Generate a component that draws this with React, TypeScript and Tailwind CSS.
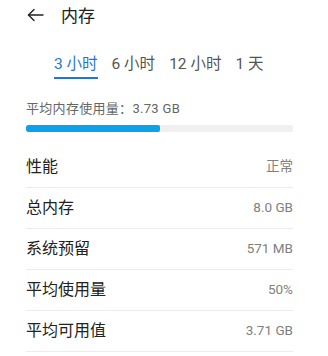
import React, { useState } from "react";

const tabs = ["3 小时", "6 小时", "12 小时", "1 天"];

const rows = [
  { label: "性能", value: "正常" },
  { label: "总内存", value: "8.0 GB" },
  { label: "系统预留", value: "571 MB" },
  { label: "平均使用量", value: "50%" },
  { label: "平均可用值", value: "3.71 GB" },
];

function BackArrow() {
  return (
    <svg width="17" height="16" viewBox="0 0 17 16" fill="none" stroke="#222" strokeWidth="1.4" strokeLinecap="round" strokeLinejoin="round">
      <path d="M1.5 8H16" />
      <path d="M7 2.5L1.5 8L7 13.5" />
    </svg>
  );
}

export default function App() {
  const [active, setActive] = useState(0);

  return (
    <div
      className="w-[328px] h-[356px] bg-white overflow-hidden"
      style={{ fontFamily: 'Roboto, "Noto Sans CJK SC", sans-serif' }}
    >
      {/* Header */}
      <div className="h-[30px] flex items-center pl-[27px]">
        <BackArrow />
        <span className="ml-[17px] text-[17px] leading-[20px] text-[#222] mt-[2px]">内存</span>
      </div>

      {/* Tabs */}
      <div className="mt-[24px] pl-[54px] flex gap-[14px]">
        {tabs.map((t, i) => (
          <button key={t} onClick={() => setActive(i)} className="flex flex-col items-stretch">
            <span
              className={`text-[15.5px] leading-[20px] whitespace-nowrap ${
                i === active ? "text-[#1f74e0]" : "text-[#555]"
              }`}
            >
              {t}
            </span>
            <span className={`mt-[3px] h-[1.5px] ${i === active ? "bg-[#1f74e0]" : "bg-transparent"}`} />
          </button>
        ))}
      </div>

      <div className="pl-[26px] pr-[35px]">
        {/* Average usage */}
        <div className="mt-[21px] text-[13px] leading-[18px] text-[#666] tracking-[0.3px]">
          平均内存使用量：3.73 GB
        </div>
        <div className="mt-[7px] h-[7px] bg-[#f0f0f0] rounded-[2px] overflow-hidden">
          <div className="h-full w-1/2 bg-[#0aa2e8] rounded-[2px]" />
        </div>

        {/* Details */}
        <div className="mt-[15px]">
          {rows.map((r) => (
            <div key={r.label} className="h-[41px] flex items-center justify-between border-b border-[#ececec]">
              <span className="text-[16px] text-[#222]">{r.label}</span>
              <span className="text-[13.5px] text-[#808080]">{r.value}</span>
            </div>
          ))}
        </div>
      </div>
    </div>
  );
}
